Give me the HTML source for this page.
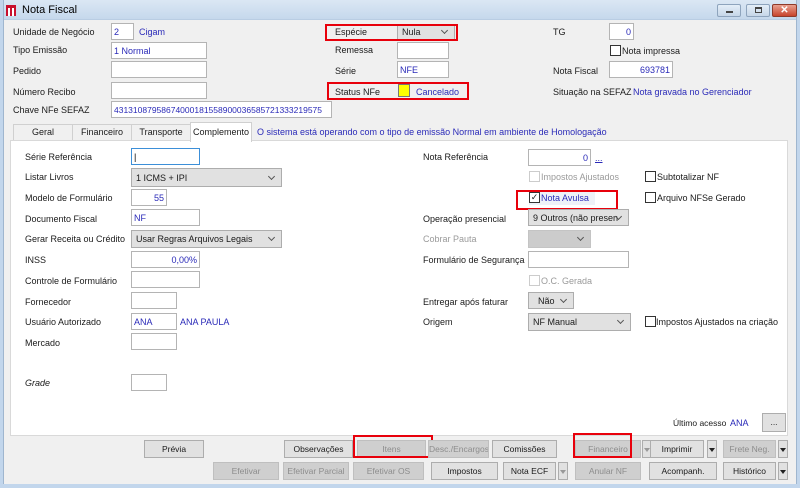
<!DOCTYPE html>
<html><head><meta charset="utf-8"><style>
*{box-sizing:border-box;margin:0;padding:0}
body{width:800px;height:488px;overflow:hidden;background:#f0f0f0;font-family:"Liberation Sans",sans-serif;font-size:9px;color:#1a1a1a;position:relative}
.a{position:absolute;white-space:nowrap}
.l{position:absolute;white-space:nowrap;line-height:12px}
.b{position:absolute;background:#fff;border:1px solid #b4b4b4;color:#2a2ab8;padding:0 2px;overflow:hidden;white-space:nowrap;display:flex;align-items:center}
.r{justify-content:flex-end}
.c{position:absolute;background:#e1e1e1;border:1px solid #adadad;padding:0 4px;white-space:nowrap;overflow:hidden;display:flex;align-items:center}
.c:after{content:"";position:absolute;right:7px;top:50%;margin-top:-4px;width:4px;height:4px;border-right:1px solid #555;border-bottom:1px solid #555;transform:rotate(45deg)}
.cb{position:absolute;width:11px;height:11px;border:1px solid #333;background:#fff}
.cbd{border-color:#ccc}
.red{position:absolute;border:2px solid #e8000b}
.btn{position:absolute;height:18px;background:#e1e1e1;border:1px solid #adadad;text-align:center;line-height:16px;font-size:8.5px;white-space:nowrap;overflow:hidden}
.dis{color:#8d8d8d;background:#cfcfcf;border-color:#bfbfbf}
.ar{position:absolute;height:18px;width:10px;background:#e1e1e1;border:1px solid #adadad}
.ar:after{content:"";position:absolute;left:1px;top:7px;border-left:3px solid transparent;border-right:3px solid transparent;border-top:4px solid #222}
.ar.dis:after{border-top-color:#999}
.g{color:#9a9a9a}
</style></head><body>
<div class="a" style="left:0;top:0;width:800px;height:20px;background:linear-gradient(#dbe7f4,#c5d8ec);border-bottom:1px solid #b9cde3"></div>
<div class="a" style="left:0;top:0;width:4px;height:488px;background:#c2d6ec;border-right:1px solid #9fb6cf"></div>
<div class="a" style="left:796px;top:0;width:4px;height:488px;background:#c2d6ec;border-left:1px solid #9fb6cf"></div>
<div class="a" style="left:0;top:484px;width:800px;height:4px;background:#c2d6ec"></div>
<div class="a" style="left:6px;top:5px;width:10px;height:11px;background:#c8102e"></div>
<div class="a" style="left:8px;top:8px;width:6px;height:8px;border-left:2px solid #fff;border-right:2px solid #fff"></div>
<div class="a" style="left:22px;top:4px;font-size:11px;color:#000">Nota Fiscal</div>
<div class="a" style="left:717px;top:4px;width:24px;height:13px;background:linear-gradient(#e4eef8,#c6d6e8);border:1px solid #8ea4bd;border-radius:2px"><div class="a" style="left:8px;top:6px;width:7px;height:2px;background:#444"></div></div>
<div class="a" style="left:746px;top:4px;width:24px;height:13px;background:linear-gradient(#e4eef8,#c6d6e8);border:1px solid #8ea4bd;border-radius:2px"><div class="a" style="left:8px;top:2px;width:7px;height:6px;border:1px solid #444;border-top-width:2px"></div></div>
<div class="a" style="left:772px;top:4px;width:25px;height:13px;background:linear-gradient(#e8a090,#c7442c);border:1px solid #8e3a2a;border-radius:2px;color:#fff;font-weight:bold;text-align:center;line-height:11px;font-size:10px">✕</div>

<div class="l" style="left:13px;top:26px">Unidade de Negócio</div>
<div class="b" style="left:111px;top:23px;width:23px;height:17px">2</div>
<div class="l" style="left:139px;top:26px;color:#2a2ab8">Cigam</div>
<div class="l" style="left:13px;top:44px">Tipo Emissão</div>
<div class="b" style="left:111px;top:42px;width:96px;height:17px">1 Normal</div>
<div class="l" style="left:13px;top:65px">Pedido</div>
<div class="b" style="left:111px;top:61px;width:96px;height:17px"></div>
<div class="l" style="left:13px;top:86px">Número Recibo</div>
<div class="b" style="left:111px;top:82px;width:96px;height:17px"></div>
<div class="l" style="left:13px;top:104px">Chave NFe SEFAZ</div>
<div class="b" style="left:111px;top:101px;width:221px;height:17px;font-size:8.5px">43131087958674000181558900036585721333219575</div>

<div class="l" style="left:335px;top:26px">Espécie</div>
<div class="c" style="left:397px;top:24px;width:58px;height:16px">Nula</div>
<div class="red" style="left:325px;top:24px;width:133px;height:17px"></div>
<div class="l" style="left:335px;top:44px">Remessa</div>
<div class="b" style="left:397px;top:42px;width:52px;height:17px"></div>
<div class="l" style="left:335px;top:65px">Série</div>
<div class="b" style="left:397px;top:61px;width:52px;height:17px">NFE</div>
<div class="l" style="left:335px;top:86px">Status NFe</div>
<div class="a" style="left:398px;top:84px;width:12px;height:13px;background:#ffff00;border:1px solid #777"></div>
<div class="l" style="left:416px;top:86px;color:#2a2ab8">Cancelado</div>
<div class="red" style="left:327px;top:82px;width:142px;height:18px"></div>

<div class="l" style="left:553px;top:26px">TG</div>
<div class="b r" style="left:609px;top:23px;width:25px;height:17px">0</div>
<div class="cb" style="left:610px;top:45px"></div>
<div class="l" style="left:622px;top:45px">Nota impressa</div>
<div class="l" style="left:553px;top:65px">Nota Fiscal</div>
<div class="b r" style="left:609px;top:61px;width:64px;height:17px">693781</div>
<div class="l" style="left:553px;top:86px">Situação na SEFAZ</div>
<div class="l" style="left:633px;top:86px;color:#2a2ab8">Nota gravada no Gerenciador</div>

<div class="a" style="left:13px;top:124px;width:60px;height:17px;background:#f0f0f0;border:1px solid #d0d0d0;text-align:center;line-height:15px">Geral</div>
<div class="a" style="left:72px;top:124px;width:60px;height:17px;border:1px solid #d0d0d0;text-align:center;line-height:15px">Financeiro</div>
<div class="a" style="left:131px;top:124px;width:60px;height:17px;border:1px solid #d0d0d0;text-align:center;line-height:15px">Transporte</div>
<div class="a" style="left:10px;top:140px;width:778px;height:296px;background:#fff;border:1px solid #d9d9d9"></div>
<div class="a" style="left:190px;top:122px;width:62px;height:20px;background:#fff;border:1px solid #d0d0d0;border-bottom:none;text-align:center;line-height:18px">Complemento</div>
<div class="l" style="left:257px;top:126px;color:#2a2ab8">O sistema está operando com o tipo de emissão Normal em ambiente de Homologação</div>

<div class="l" style="left:25px;top:151px">Série Referência</div>
<div class="b" style="left:131px;top:148px;width:69px;height:17px;border-color:#3c8fd8;color:#000">|</div>
<div class="l" style="left:25px;top:171px">Listar Livros</div>
<div class="c" style="left:131px;top:168px;width:151px;height:19px">1 ICMS + IPI</div>
<div class="l" style="left:25px;top:192px">Modelo de Formulário</div>
<div class="b r" style="left:131px;top:189px;width:36px;height:17px">55</div>
<div class="l" style="left:25px;top:213px">Documento Fiscal</div>
<div class="b" style="left:131px;top:209px;width:69px;height:17px">NF</div>
<div class="l" style="left:25px;top:233px">Gerar Receita ou Crédito</div>
<div class="c" style="left:131px;top:230px;width:151px;height:18px">Usar Regras Arquivos Legais</div>
<div class="l" style="left:25px;top:254px">INSS</div>
<div class="b r" style="left:131px;top:251px;width:69px;height:17px">0,00%</div>
<div class="l" style="left:25px;top:275px">Controle de Formulário</div>
<div class="b" style="left:131px;top:271px;width:69px;height:17px"></div>
<div class="l" style="left:25px;top:296px">Fornecedor</div>
<div class="b" style="left:131px;top:292px;width:46px;height:17px"></div>
<div class="l" style="left:25px;top:316px">Usuário Autorizado</div>
<div class="b" style="left:131px;top:313px;width:46px;height:17px">ANA</div>
<div class="l" style="left:180px;top:316px;color:#2a2ab8">ANA PAULA</div>
<div class="l" style="left:25px;top:337px">Mercado</div>
<div class="b" style="left:131px;top:333px;width:46px;height:17px"></div>
<div class="l" style="left:25px;top:377px;font-style:italic">Grade</div>
<div class="b" style="left:131px;top:374px;width:36px;height:17px"></div>

<div class="l" style="left:423px;top:151px">Nota Referência</div>
<div class="b r" style="left:528px;top:149px;width:63px;height:17px">0</div>
<div class="l" style="left:595px;top:152px;color:#2a2ab8;text-decoration:underline">...</div>
<div class="cb cbd" style="left:529px;top:171px"></div>
<div class="l g" style="left:541px;top:171px">Impostos Ajustados</div>
<div class="cb" style="left:645px;top:171px"></div>
<div class="l" style="left:657px;top:171px">Subtotalizar NF</div>
<div class="a" style="left:529px;top:191px;width:66px;height:14px;background:#eef2f8"></div>
<div class="cb" style="left:529px;top:192px;font-size:9px;line-height:9px;text-align:center">✓</div>
<div class="l" style="left:541px;top:192px;color:#2a2ab8">Nota Avulsa</div>
<div class="red" style="left:516px;top:190px;width:102px;height:20px"></div>
<div class="cb" style="left:645px;top:192px"></div>
<div class="l" style="left:657px;top:192px">Arquivo NFSe Gerado</div>
<div class="l" style="left:423px;top:213px">Operação presencial</div>
<div class="c" style="left:528px;top:209px;width:101px;height:17px;padding-right:16px">9 Outros (não presen</div>
<div class="l g" style="left:423px;top:233px">Cobrar Pauta</div>
<div class="c" style="left:528px;top:230px;width:63px;height:18px;background:#ccc;border-color:#c4c4c4"></div>
<div class="l" style="left:423px;top:254px">Formulário de Segurança</div>
<div class="b" style="left:528px;top:251px;width:101px;height:17px"></div>
<div class="cb cbd" style="left:529px;top:275px"></div>
<div class="l g" style="left:541px;top:275px">O.C. Gerada</div>
<div class="l" style="left:423px;top:296px">Entregar após faturar</div>
<div class="c" style="left:528px;top:292px;width:46px;height:17px;padding-left:9px">Não</div>
<div class="l" style="left:423px;top:316px">Origem</div>
<div class="c" style="left:528px;top:313px;width:103px;height:18px">NF Manual</div>
<div class="cb" style="left:645px;top:316px"></div>
<div class="l" style="left:656px;top:316px">Impostos Ajustados na criação</div>

<div class="l" style="left:673px;top:417px;font-size:8.5px">Último acesso</div>
<div class="l" style="left:730px;top:417px;color:#2a2ab8">ANA</div>
<div class="btn" style="left:762px;top:413px;width:24px;height:19px">...</div>

<div class="btn" style="left:144px;top:440px;width:60px">Prévia</div>
<div class="btn" style="left:284px;top:440px;width:69px">Observações</div>
<div class="btn dis" style="left:357px;top:440px;width:69px">Itens</div>
<div class="red" style="left:353px;top:435px;width:80px;height:23px"></div>
<div class="btn dis" style="left:428px;top:440px;width:61px">Desc./Encargos</div>
<div class="btn" style="left:492px;top:440px;width:65px">Comissões</div>
<div class="btn dis" style="left:575px;top:440px;width:66px">Financeiro</div>
<div class="ar dis" style="left:642px;top:440px"></div>
<div class="red" style="left:573px;top:433px;width:59px;height:25px"></div>
<div class="btn" style="left:650px;top:440px;width:54px">Imprimir</div>
<div class="ar" style="left:707px;top:440px"></div>
<div class="btn dis" style="left:723px;top:440px;width:53px">Frete Neg.</div>
<div class="ar" style="left:778px;top:440px"></div>

<div class="btn dis" style="left:213px;top:462px;width:66px">Efetivar</div>
<div class="btn dis" style="left:283px;top:462px;width:66px">Efetivar Parcial</div>
<div class="btn dis" style="left:353px;top:462px;width:71px">Efetivar OS</div>
<div class="btn" style="left:431px;top:462px;width:67px">Impostos</div>
<div class="btn" style="left:503px;top:462px;width:53px">Nota ECF</div>
<div class="ar dis" style="left:558px;top:462px"></div>
<div class="btn dis" style="left:575px;top:462px;width:66px">Anular NF</div>
<div class="btn" style="left:649px;top:462px;width:68px">Acompanh.</div>
<div class="btn" style="left:723px;top:462px;width:53px">Histórico</div>
<div class="ar" style="left:778px;top:462px"></div>
</body></html>
